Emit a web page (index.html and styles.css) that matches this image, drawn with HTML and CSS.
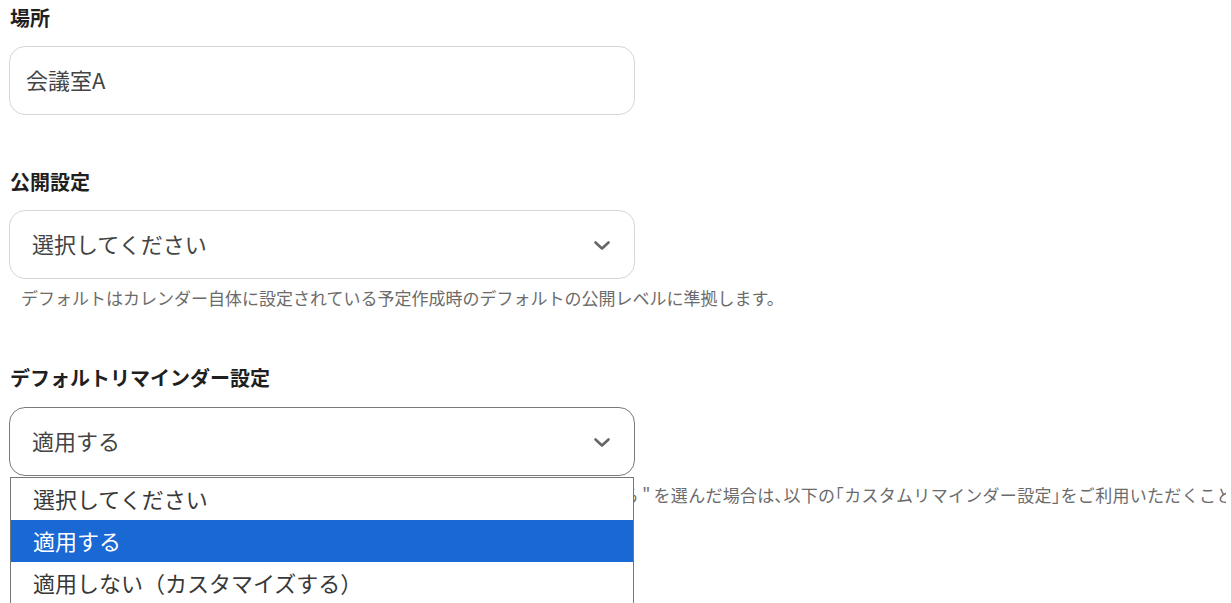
FILE: index.html
```html
<!DOCTYPE html>
<html lang="ja">
<head>
<meta charset="utf-8">
<title>設定</title>
<link rel="stylesheet" href="styles.css">
</head>
<body>
<div class="form">
  <div class="group g1">
    <div class="label">場所</div>
    <div class="field input">会議室A</div>
  </div>

  <div class="group g2">
    <div class="label">公開設定</div>
    <div class="field select">
      <span>選択してください</span>
      <svg class="chev" width="18" height="11" viewBox="0 0 18 11"><path d="M2.5 2.5 L9 8.5 L15.5 2.5" fill="none" stroke="#666" stroke-width="2.6" stroke-linecap="round" stroke-linejoin="round"/></svg>
    </div>
    <div class="hint">デフォルトはカレンダー自体に設定されている予定作成時のデフォルトの公開レベルに準拠します。</div>
  </div>

  <div class="group g3">
    <div class="label">デフォルトリマインダー設定</div>
    <div class="select-wrap">
      <div class="field select open">
        <span>適用する</span>
        <svg class="chev" width="18" height="11" viewBox="0 0 18 11"><path d="M2.5 2.5 L9 8.5 L15.5 2.5" fill="none" stroke="#666" stroke-width="2.6" stroke-linecap="round" stroke-linejoin="round"/></svg>
      </div>
      <ul class="menu">
        <li class="opt">選択してください</li>
        <li class="opt selected">適用する</li>
        <li class="opt">適用しない（カスタマイズする）</li>
      </ul>
    </div>
    <div class="hint clip">デフォルトはカレンダー側のリマインダー設定に準拠します｡<span class="q">"</span>カスタマイズする<span class="q">"</span>を選んだ場合は､以下の｢カスタムリマインダー設定｣をご利用いただくことができます｡</div>
  </div>
</div>
</body>
</html>
```

FILE: styles.css
```css
html {
  overflow: hidden;
}

html, body {
  margin: 0;
  padding: 0;
  background: #ffffff;
}

body {
  font-family: "Noto Sans CJK JP", "Noto Sans", sans-serif;
  color: #333333;
  min-height: 603px;
}

.form {
  padding: 4px 0 0 9px;
  display: flex;
  flex-direction: column;
}

.group {
  display: flex;
  flex-direction: column;
}

.g2 {
  margin-top: 53px;
}

.g3 {
  margin-top: 54px;
}

.label {
  font-size: 20px;
  line-height: 28px;
  font-weight: 700;
  color: #1f1f1f;
  padding-left: 1px;
  margin-bottom: 14px;
}

.g3 .label {
  margin-bottom: 15px;
}

.field {
  box-sizing: border-box;
  width: 626px;
  height: 69px;
  border: 1px solid #d3d6db;
  border-radius: 16px;
  font-size: 22px;
  color: #444444;
  display: flex;
  align-items: center;
  padding-bottom: 4px;
}

.input {
  padding-left: 16px;
}

.select {
  padding-left: 22px;
  padding-right: 23px;
  justify-content: space-between;
}

.select.open {
  border-color: #7a7a7a;
}

.chev {
  display: block;
  margin-top: 6px;
}

.hint {
  font-size: 17px;
  line-height: 24px;
  color: #6b6b6b;
  margin: 7px 0 0 12px;
}

.clip {
  white-space: nowrap;
  overflow: hidden;
  width: 1205px;
  letter-spacing: 0.3px;
  text-indent: -10px;
}

.q {
  padding: 0 3px;
}

.select-wrap {
  position: relative;
}

.menu {
  position: absolute;
  top: calc(100% + 1px);
  left: 1px;
  width: 624px;
  box-sizing: border-box;
  margin: 0;
  padding: 0;
  list-style: none;
  background: #ffffff;
  border: 1px solid #767676;
  z-index: 2;
}

.opt {
  height: 42px;
  padding-left: 22px;
  font-size: 22px;
  line-height: 40px;
  color: #383838;
}

.opt.selected {
  background: #1a68d4;
  color: #ffffff;
}
```
